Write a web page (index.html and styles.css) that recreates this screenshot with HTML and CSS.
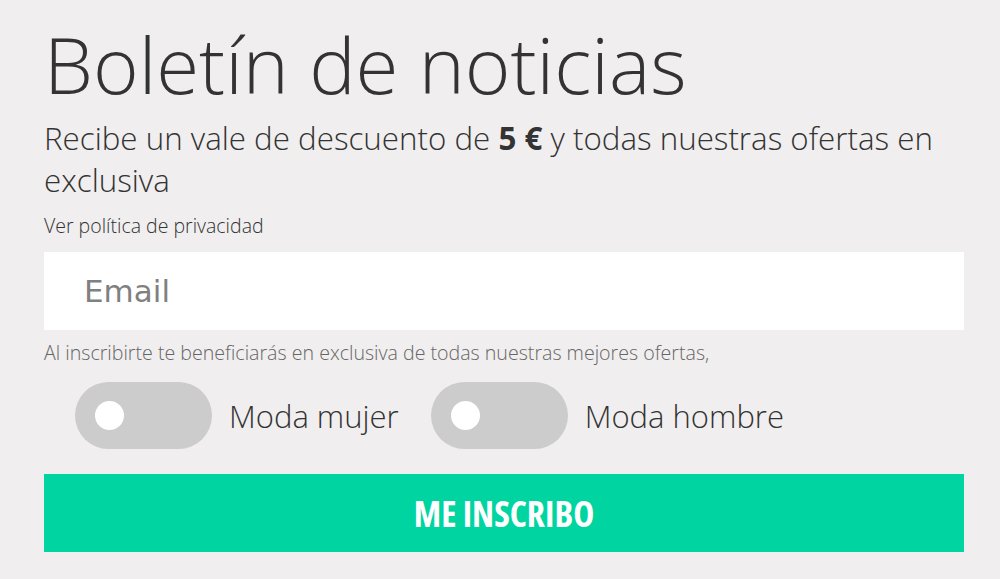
FILE: index.html
```html
<!DOCTYPE html>
<html lang="es">
<head>
<meta charset="utf-8">
<title>Boletín de noticias</title>
<link rel="stylesheet" href="styles.css">
</head>
<body>
<div class="newsletter">
  <h1 class="title">Boletín de noticias</h1>
  <p class="lead">Recibe un vale de descuento de <strong>5 €</strong> y todas nuestras ofertas en exclusiva</p>
  <a class="privacy" href="#">Ver política de privacidad</a>
  <div class="email">Email</div>
  <p class="note">Al inscribirte te beneficiarás en exclusiva de todas nuestras mejores ofertas,</p>
  <div class="toggles">
    <label class="toggle"><span class="switch"><span class="knob"></span></span><span class="toggle-label">Moda mujer</span></label>
    <label class="toggle"><span class="switch"><span class="knob"></span></span><span class="toggle-label">Moda hombre</span></label>
  </div>
  <div class="button"><span class="button-text">ME INSCRIBO</span></div>
</div>
</body>
</html>
```
FILE: styles.css
```css
html, body {
  margin: 0;
  padding: 0;
  background: #f0eeee;
}
body {
  font-family: "Open Sans", "Liberation Sans", sans-serif;
  color: #333333;
}
.newsletter {
  padding: 16px 36px 0 44px;
  display: flex;
  flex-direction: column;
  align-items: stretch;
}
.title {
  margin: 0;
  font-size: 78px;
  font-weight: 300;
  line-height: 96px;
}
.lead {
  margin: 5px 0 0 0;
  font-size: 31.3px;
  font-weight: 300;
  line-height: 42px;
}
.lead strong {
  font-weight: 700;
}
.privacy {
  align-self: flex-start;
  margin-top: 11px;
  font-size: 19.5px;
  font-weight: 300;
  color: #333;
  text-decoration: none;
  line-height: 28px;
}
.email {
  margin-top: 12px;
  height: 78px;
  background: #ffffff;
  display: flex;
  align-items: center;
  padding-left: 40px;
  font-family: "DejaVu Sans", Verdana, sans-serif;
  font-size: 31px;
  color: #808080;
}
.note {
  margin: 10px 0 0 0;
  font-size: 19.6px;
  font-weight: 300;
  color: #666;
  line-height: 26px;
}
.toggles {
  display: flex;
  align-items: center;
  gap: 32px;
  padding-left: 31px;
  margin-top: 16px;
}
.toggle {
  display: flex;
  align-items: center;
  gap: 17px;
}
.switch {
  width: 137px;
  height: 67px;
  border-radius: 34px;
  background: #cccccc;
  display: flex;
  align-items: center;
  padding-left: 20px;
  box-sizing: border-box;
}
.knob {
  width: 29px;
  height: 29px;
  border-radius: 50%;
  background: #ffffff;
}
.toggle-label {
  font-size: 31px;
  font-weight: 300;
  color: #333;
}
.button {
  margin-top: 25px;
  height: 78px;
  background: #00d4a0;
  display: flex;
  align-items: center;
  justify-content: center;
}
.button-text {
  font-family: "Open Sans", sans-serif;
  font-stretch: 75%;
  font-weight: 700;
  font-size: 35.5px;
  color: #ffffff;
}
```
